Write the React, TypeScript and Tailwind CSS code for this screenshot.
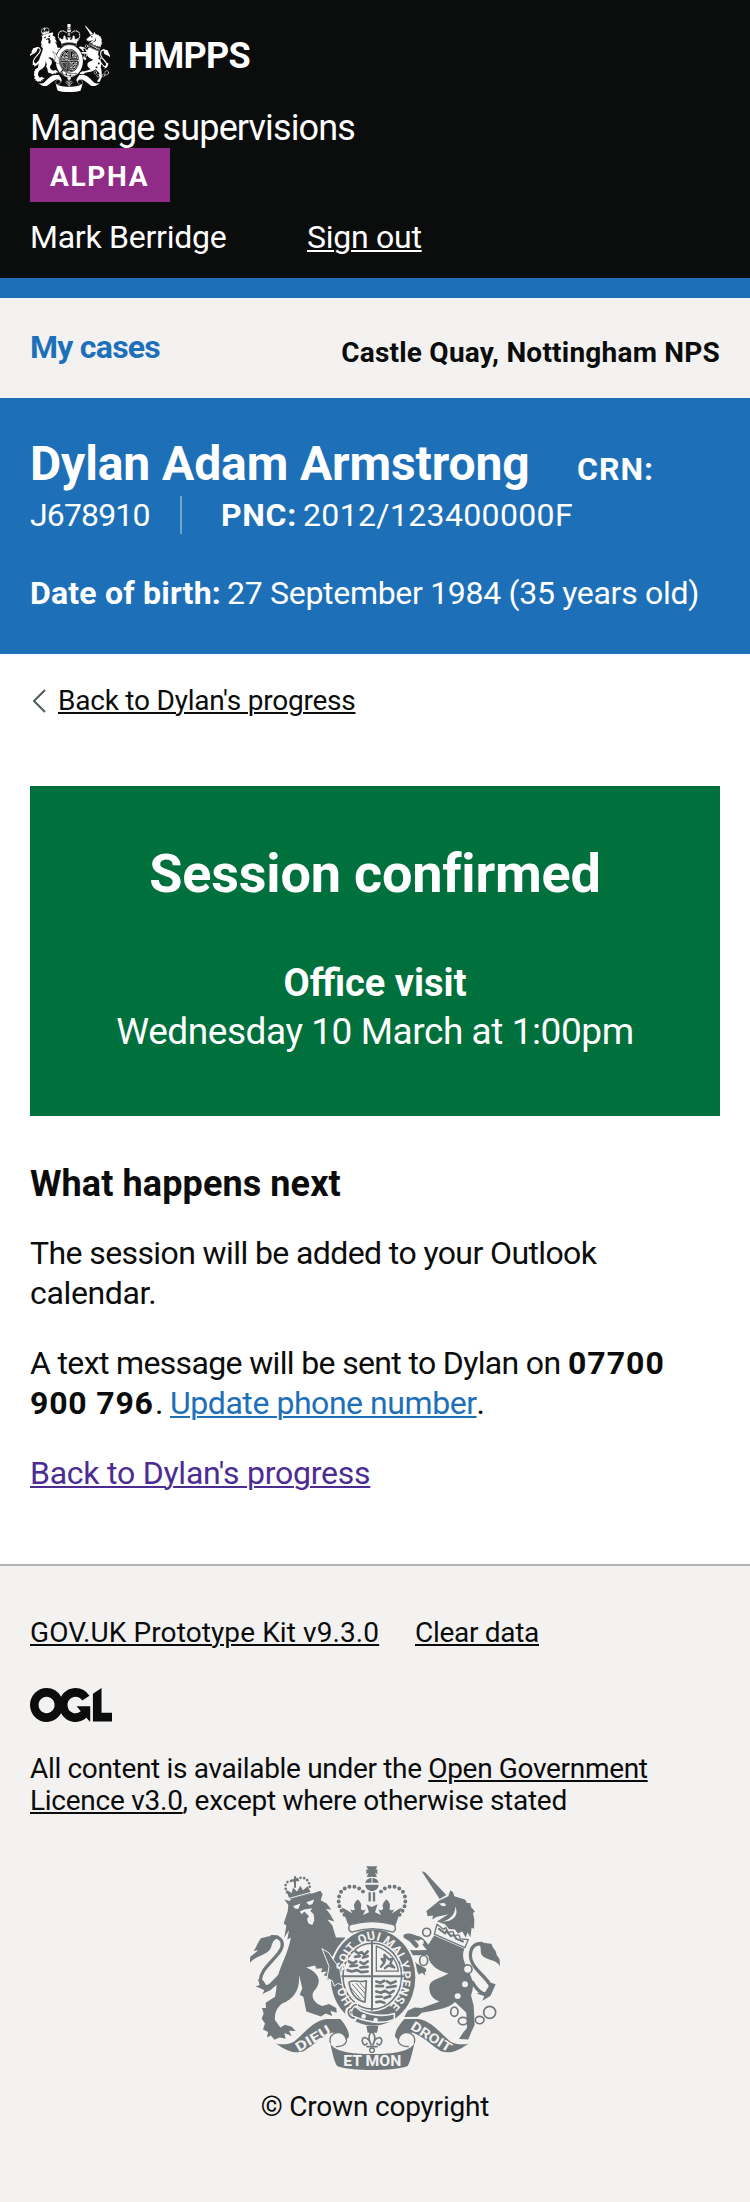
import type { ReactNode } from "react";

type CrestProps = { className: string; fg: string; bg: string; motto?: boolean };

function Crest({ className, fg, bg, motto = false }: CrestProps) {
  const id = motto ? "garter-large" : "garter-small";
  return (
    <svg className={className} viewBox="45 47 750 613" preserveAspectRatio="none" aria-hidden="true">
      <defs>
        <path id={id} d="M414 491 A100 112 0 0 1 414 269 A100 112 0 0 1 414 491" />
      </defs>
      <g fill={fg} strokeLinejoin="round" strokeLinecap="round">
        {/* lion */}
        <path d="M148 148 L164 152 L172 144 L236 128 L256 121 L263 131 L257 150 L275 160 L289 178 L273 176 L284 190 L298 214 L277 208 L292 226 L303 262 L330 262 L330 300 L290 320 L258 294 L302 340 L320 352 L324 404 L308 404 L298 408 L292 396 L274 386 L284 378 L266 376 L276 364 L258 366 L262 354 L244 356 L240 346 L214 352 C248 366 266 392 236 424 C226 440 240 462 262 468 L282 462 L304 474 L305 488 L286 482 L292 498 L272 490 L258 499 L236 492 L214 484 L205 440 L194 434 L202 414 L192 374 C194 410 186 436 152 456 C128 464 118 488 120 510 L136 532 L150 524 L170 530 L182 543 L162 542 L170 558 L148 549 L152 566 L134 562 L118 569 L108 556 L96 562 L99 546 L84 538 L90 520 L80 505 L86 490 L81 474 L93 474 L92 458 L120 440 C126 414 124 396 128 378 C140 340 158 310 168 262 L157 268 L162 240 L148 262 L154 226 L146 220 L158 184 L160 164 Z" />
        <g fill={bg}>
          <path d="M174 168 L196 160 L190 176 L180 175Z" />
          <path d="M214 156 L238 148 L232 162 L222 164Z" />
          <path d="M194 184 L208 178 L216 176 L232 174 L226 182 L236 192 L238 210 L232 224 L220 220 L216 206 L222 198 L208 184 L200 192Z" />
        </g>
        <path d="M110 259 C142 258 152 282 130 310 C104 342 76 362 76 392 C78 420 104 412 128 390" fill="none" stroke={fg} strokeWidth="10" />
        <path d="M130 374 L134 396 L106 420 L82 432 L88 420 L62 408 L78 404 L68 388 L84 390 L96 408 Z" />
        <path d="M130 256 C100 256 92 262 78 264 C68 276 64 292 56 302 L70 300 L46 320 L44 340 C54 320 92 316 105 298 C114 284 108 270 130 264 Z" />
        {/* lion's crown */}
        <path d="M160 138 L154 118 L170 128 L174 112 L186 124 L196 106 L204 120 L218 108 L226 124 L228 130 L166 148Z" />
        <path d="M156 126 C142 96 162 88 180 94 C190 74 228 78 224 118" fill="none" stroke={fg} strokeWidth="8" strokeDasharray="0 11" />
        <path d="M180 80 V110 M171 90 H190" stroke={fg} strokeWidth="6" />
        <path d="M164 144 L228 126" stroke={bg} strokeWidth="3" />

        {/* unicorn */}
        <path d="M560 63 L570 66 L634 134 L614 146Z" />
        <path d="M614 150 L640 138 L646 120 L654 126 L658 138 L690 148 L696 158 L706 158 L708 170 L720 184 L714 188 L718 208 L717 236 L710 232 L706 262 L698 246 L692 262 L682 244 L668 250 L660 238 L642 236 L630 222 L606 214 L640 192 L604 200 L592 208 L594 196 L578 198 L574 182 L592 168 Z" />
        <path d="M612 160 L628 158 L634 166 L622 168Z M660 168 C664 192 640 216 608 216 L640 212 C664 206 670 186 660 168Z" fill={bg} />
        <path d="M606 222 L626 238 L632 232 L640 246 L654 244 L658 256 L672 254 L676 266 L700 268 L690 292 L598 252 Z" fill={bg} stroke={fg} strokeWidth="4" />
        <path d="M612 236 L630 250 L634 242 L648 258 L656 254 L664 266 L684 274" fill="none" stroke={fg} strokeWidth="6" />
        <path d="M597 256 L688 296 C678 322 690 338 700 362 C722 404 712 420 708 436 L716 466 L719 524 L708 548 L700 568 L672 567 L684 548 L696 534 L694 488 L660 456 C640 478 590 482 560 488 L548 500 L508 501 L518 482 L538 472 L560 474 L614 454 C588 446 580 424 584 404 C592 386 614 386 640 370 C610 362 590 348 582 328 L575 292 Z" />
        <path d="M590 302 C570 290 568 268 548 264 C536 262 528 254 512 258 L528 268 L544 286" fill="none" stroke={fg} strokeWidth="14" />
        <path d="M598 318 C570 296 548 314 528 306 C516 312 526 332 538 344 L566 360" fill="none" stroke={fg} strokeWidth="15" />
        <path d="M536 344 L564 354 L572 376 L560 368 L552 374Z" />
        <path d="M742 280 C706 278 692 318 724 356 C748 384 776 404 766 426 C756 442 730 428 712 396" fill="none" stroke={fg} strokeWidth="10" />
        <path d="M732 276 C752 280 764 278 770 282 C774 298 786 302 784 312 L794 328 L795 348 C782 326 752 332 740 314 C734 302 742 290 730 282Z" />
        <path d="M768 398 L782 402 L774 420 L766 438 L742 452 L748 438 L724 430 L750 426Z" />
        <g fill="none" stroke={fg} strokeWidth="5">
          <circle cx="575" cy="246" r="12" />
          <ellipse cx="566" cy="331" rx="12" ry="15" fill={bg} />
          <circle cx="698" cy="357" r="13" fill={bg} />
          <ellipse cx="658" cy="485" rx="11" ry="14" />
          <ellipse cx="684" cy="513" rx="14" ry="11" />
          <ellipse cx="734" cy="510" rx="13" ry="11" />
          <circle cx="764" cy="487" r="18" />
        </g>
        <circle cx="690" cy="402" r="9" fill={bg} />
        <circle cx="668" cy="438" r="9" fill={bg} />
        <circle cx="558" cy="276" r="8" fill={bg} />

        {/* garter and shield */}
        <ellipse cx="414" cy="382" rx="133" ry="151" fill={bg} />
        <ellipse cx="414" cy="382" rx="127" ry="145" />
        <ellipse cx="412" cy="378" rx="95" ry="106" fill={bg} />
        <ellipse cx="412" cy="378" rx="88" ry="99" fill="none" stroke={fg} strokeWidth="5" />
        <path d="M411 274 V480 M320 378 H504" stroke={fg} strokeWidth="6" />
        <g fill="none" stroke={fg} strokeWidth="8">
          <path d="M362 304 L370 310 L380 306 L388 314 L398 304 M360 320 L374 318 M384 322 L398 318" />
          <path d="M342 334 L352 340 L364 334 M376 336 L386 342 L398 334 M346 348 L366 346 M376 352 L398 350" />
          <path d="M338 360 L350 364 L366 360 L378 366 L398 364" />
          <path d="M424 394 L436 398 L448 392 M456 394 L466 400 L482 394 M424 408 L444 408 M456 412 L482 408" />
          <path d="M424 424 L438 428 L450 422 L464 430 L476 422 M424 440 L440 440 M448 444 L466 438" />
          <path d="M424 456 L436 454 L448 458" />
          <path d="M424 296 V363 H490 C486 330 464 304 424 288Z" strokeWidth="4" />
          <path d="M438 350 L448 338 L440 326 L450 332 L448 314 L462 328 L472 326 L466 340 L478 352 L460 346 L450 354" strokeWidth="7" />
          <path d="M342 396 C360 386 372 400 394 392 L390 456 C362 450 346 428 342 396Z" strokeWidth="5" />
          <path d="M352 402 L388 444 M364 400 L390 430 M376 400 L390 416 M348 414 L376 446" strokeWidth="3" />
        </g>
        {/* lion's forepaw over the garter */}
        <path d="M262 296 L282 308 L296 330 L314 354 L322 404 L308 400 L298 408 L292 392 L276 384 L282 350Z" stroke={bg} strokeWidth="3" />
        {motto && (
          <g fill={bg} fontFamily="Roboto, sans-serif" fontWeight="700" fontSize="37" textAnchor="middle">
            <text><textPath href={"#" + id} startOffset="16%">HO</textPath></text>
            <text><textPath href={"#" + id} startOffset="34.5%">SOIT</textPath></text>
            <text><textPath href={"#" + id} startOffset="48.2%">QUI</textPath></text>
            <text><textPath href={"#" + id} startOffset="61%">MAL</textPath></text>
            <text><textPath href={"#" + id} startOffset="69.6%">Y</textPath></text>
            <text><textPath href={"#" + id} startOffset="81.5%">PENSE</textPath></text>
          </g>
        )}
        {/* buckle */}
        <path d="M352 462 L378 482 C410 496 446 500 478 490 L478 508 C440 524 390 514 352 498Z" stroke={bg} strokeWidth="5" />
        <path d="M362 464 C346 462 354 476 340 478 C334 488 342 504 358 506" fill="none" stroke={bg} strokeWidth="15" />
        <path d="M364 464 C348 462 356 476 342 478 C336 488 344 504 358 504 M358 478 C350 486 354 496 364 496" fill="none" stroke={fg} strokeWidth="5" />
        <circle cx="386" cy="499" r="7" fill={bg} />
        <circle cx="422" cy="510" r="7" fill={bg} />

        {/* crown */}
        <path d="M394 48 H427 L421 60 L427 56 V72 L420 67 L426 80 H395 L401 67 L394 72 V56 L401 60Z" />
        <path d="M391 97 C394 78 428 78 431 97Z M391 103 H431 C431 128 391 128 391 103Z" />
        <path d="M411 80 V98" stroke={bg} strokeWidth="3" />
        <path d="M404 126 V154 M417 126 V154" stroke={fg} strokeWidth="7" strokeLinecap="butt" />
        <g fill="none" stroke={fg} strokeWidth="12" strokeDasharray="0 15">
          <path d="M384 124 C366 102 326 104 314 132 C306 158 314 180 334 200" />
          <path d="M438 124 C456 102 496 104 508 132 C516 158 508 180 488 200" />
        </g>
        <path d="M330 176 L352 190 L346 178 C356 182 362 180 358 172 C354 162 364 152 368 148 C374 152 382 162 378 172 C376 180 384 182 392 178 L384 194 L402 186 L394 162 L410 170 L428 162 L420 186 L438 194 L430 178 C438 182 446 180 444 172 C440 162 450 152 454 148 C460 152 468 162 464 172 C462 180 468 182 478 178 L470 190 L492 176 L500 172 L482 224 C440 210 380 210 340 224 L320 172Z" />
        <path d="M350 222 C390 212 434 212 472 222 C484 224 484 240 474 246 C434 232 390 232 350 246 C338 240 338 226 350 222Z" fill={bg} stroke={fg} strokeWidth="4" />

        {/* fleur-de-lis */}
        <path d="M394 528 H430 L426 548 H398Z" />
        <path d="M410 544 C396 560 404 572 408 584 C400 560 380 556 382 574 C384 586 392 588 396 580 M410 544 C426 560 418 572 414 584 C420 560 442 556 440 574 C438 586 430 588 426 580 M396 590 H426" fill="none" stroke={fg} strokeWidth="5" />
        <circle cx="411" cy="601" r="7" fill={bg} stroke={fg} strokeWidth="4" />

        {/* ribbon */}
        <path d="M122 580 C140 586 164 582 178 574 C210 548 232 514 274 507 L316 507 C330 524 342 540 342 560 L326 578 C328 560 310 546 290 548 C262 558 236 584 206 604 C180 612 158 604 122 580Z" />
        <path d="M702 580 C684 586 660 582 646 574 C614 548 592 514 550 507 L508 507 C494 524 480 540 480 560 L498 578 C496 560 514 546 534 548 C562 558 588 584 618 604 C644 612 666 604 702 580Z" />
        <path d="M286 578 C280 552 306 542 324 552 C346 572 330 590 304 590" fill={bg} stroke={fg} strokeWidth="4" />
        <path d="M538 578 C544 552 518 542 500 552 C478 572 494 590 520 590" fill={bg} stroke={fg} strokeWidth="4" />
        <path d="M284 574 C290 604 350 612 412 612 C474 612 532 604 540 574 C532 604 528 630 518 648 C480 664 344 664 306 648 C294 626 292 602 284 574Z" />
        {motto && (
          <g fill={bg} fontFamily="Roboto, sans-serif" fontWeight="700" textAnchor="middle">
            <text transform="translate(241 577) rotate(-31)" fontSize="40" textLength="116" lengthAdjust="spacingAndGlyphs">DIEU</text>
            <text transform="translate(582 572) rotate(32)" fontSize="40" textLength="136" lengthAdjust="spacingAndGlyphs">DROIT</text>
            <text x="412" y="649" fontSize="46" textLength="174" lengthAdjust="spacingAndGlyphs">ET MON</text>
          </g>
        )}
      </g>
    </svg>
  );
}

function OglLogo() {
  return (
    <svg className="mt-[39px] block h-[34px] w-[82px] fill-[#0b0c0c]" viewBox="0 0 483.2 195.7" preserveAspectRatio="none" role="img" aria-label="Open Government Licence">
      <path d="M421.5 142.8V.1l-50.7 32.3v161.1h112.4v-50.7zm-122.3-9.6A47.12 47.12 0 0 1 221 97.8c0-26 21.1-47.1 47.1-47.1 16.7 0 31.4 8.7 39.7 21.8l42.7-27.2A97.63 97.63 0 0 0 268.1 0c-36.5 0-68.3 20.1-85.1 49.7A98 98 0 0 0 97.8 0C43.9 0 0 43.9 0 97.8s43.9 97.8 97.8 97.8c36.5 0 68.3-20.1 85.1-49.7a97.76 97.76 0 0 0 149.6 25.4l19.4 22.2h3v-87.8h-80l24.3 27.5zM97.8 145c-26 0-47.1-21.1-47.1-47.1s21.1-47.1 47.1-47.1 47.1 21.1 47.1 47.1S123.8 145 97.8 145" />
    </svg>
  );
}

function Link({ className = "", children }: { className?: string; children: ReactNode }) {
  return (
    <a href="#" className={"underline decoration-2 underline-offset-[2px] " + className}>
      {children}
    </a>
  );
}

export default function App() {
  return (
    <div className="flex min-h-[2202px] w-[750px] flex-col bg-[#f3f2f1] font-['Roboto','Liberation_Sans',sans-serif] whitespace-nowrap text-[#0b0c0c]">
      <header className="h-[298px] border-b-[20px] border-[#1d70b8] bg-[#0b0c0c] px-[30px] pt-6 text-white">
        <div className="flex h-[68px] items-start">
          <Crest className="h-[68px] w-[80px]" fg="#ffffff" bg="#0b0c0c" />
          <span className="mt-3 ml-[18px] text-[36px] leading-10 font-bold tracking-[-0.7px]">HMPPS</span>
        </div>
        <div className="mt-4 text-[36px] leading-10 tracking-[-0.87px]">Manage supervisions</div>
        <div className="h-[54px] w-[140px] bg-[#912b88] pl-5 text-[28px] leading-[57px] font-bold tracking-[1.7px]">ALPHA</div>
        <div className="mt-[15px] flex text-[32px] leading-10 tracking-[-0.25px]">
          <span className="w-[277px]">Mark Berridge</span>
          <Link>Sign out</Link>
        </div>
      </header>

      <nav className="flex h-[100px] justify-between px-[30px]">
        <a href="#" className="mt-[29px] text-[32px] leading-10 font-bold tracking-[-0.75px] text-[#1d70b8]">My cases</a>
        <span className="mt-[35px] text-[28px] leading-10 font-bold tracking-[0.22px]">Castle Quay, Nottingham NPS</span>
      </nav>

      <section className="h-[256px] bg-[#1d70b8] px-[30px] pt-10 text-[32px] leading-10 text-white">
        <div className="flex items-baseline">
          <h1 className="w-[547px] text-[48px] leading-[52px] font-bold tracking-[-0.1px]">Dylan Adam Armstrong</h1>
          <b className="tracking-[1px]">CRN:</b>
        </div>
        <div className="mt-[5px] flex items-center">
          <span className="w-[150px] tracking-[-0.85px]">J678910</span>
          <span className="h-[38px] w-[2px] bg-[#6fa4d3]" />
          <b className="ml-[39px] w-[82px] tracking-[0.7px]">PNC:</b>
          <span className="tracking-[0.35px]">2012/123400000F</span>
        </div>
        <div className="mt-[38px] flex">
          <b className="w-[197px] tracking-[0.2px]">Date of birth:</b>
          <span className="tracking-[-0.3px]">27 September 1984 (35 years old)</span>
        </div>
      </section>

      <main className="h-[910px] bg-white px-[30px] pt-[31px]">
        <div className="flex items-center text-[28px] leading-8">
          <svg className="mr-[11px] ml-[2px] h-[24px] w-[15px]" viewBox="0 0 15 24" fill="none" stroke="#505a5f" strokeWidth="2">
            <path d="M13 1 L2 12 L13 23" />
          </svg>
          <Link className="tracking-[-0.22px]">Back to Dylan's progress</Link>
        </div>

        <div className="mt-[69px] h-[330px] bg-[#00703c] pt-[58px] text-center text-white">
          <h2 className="text-[54px] leading-[60px] font-bold tracking-[-0.2px]">Session confirmed</h2>
          <p className="mt-[55px] text-[38px] leading-[48px] font-bold">Office visit</p>
          <p className="mt-px text-[37px] leading-[48px] tracking-[-0.44px]">Wednesday 10 March at 1:00pm</p>
        </div>

        <h3 className="mt-12 text-[36px] leading-10 font-bold tracking-[0.1px]">What happens next</h3>
        <p className="mt-[29px] text-[32px] leading-10 tracking-[-0.6px]">
          The session will be added to your Outlook
          <br />
          <span className="tracking-[-0.35px]">calendar.</span>
        </p>
        <div className="mt-[30px] text-[32px] leading-10">
          <div className="flex">
            <span className="w-[538px] tracking-[-0.65px]">A text message will be sent to Dylan on</span>
            <b className="tracking-[1px]">07700</b>
          </div>
          <div className="flex">
            <b className="w-[125px] tracking-[0.8px]">900 796</b>
            <span className="w-[15px]">.</span>
            <Link className="tracking-[-0.45px] text-[#1d70b8]">Update phone number</Link>
            <span>.</span>
          </div>
        </div>
        <p className="mt-[30px] text-[32px] leading-10">
          <Link className="tracking-[-0.24px] text-[#4c2c92]">Back to Dylan's progress</Link>
        </p>
      </main>

      <footer className="flex-1 border-t-2 border-[#b1b4b6] px-[30px] pt-[51px] text-[28px] leading-8">
        <div className="flex">
          <span className="w-[385px]">
            <Link className="tracking-[0.1px]">GOV.UK Prototype Kit v9.3.0</Link>
          </span>
          <Link className="tracking-[-0.3px]">Clear data</Link>
        </div>
        <OglLogo />
        <p className="mt-[31px] tracking-[-0.33px]">
          All content is available under the <Link>Open Government</Link>
          <br />
          <span className="tracking-[-0.26px]">
            <Link>Licence v3.0</Link>, except where otherwise stated
          </span>
        </p>
        <div className="mt-[49px] flex flex-col items-center">
          <Crest className="h-[204px] w-[250px]" fg="#6f777b" bg="#f3f2f1" motto />
          <p className="mt-[21px] tracking-[-0.2px]">© Crown copyright</p>
        </div>
      </footer>
    </div>
  );
}
